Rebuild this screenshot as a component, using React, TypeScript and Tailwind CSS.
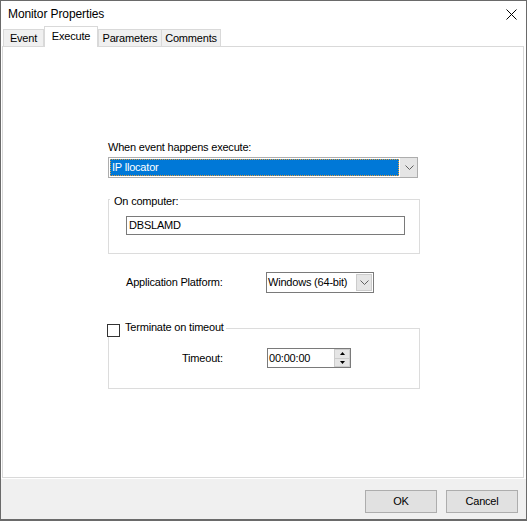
import React from "react";

const ui = { fontFamily: '"Liberation Sans", Arial, sans-serif' };

function Chevron() {
  return (
    <svg width="9" height="5" viewBox="0 0 9 5" className="block">
      <path d="M0.5 0.5 L4.5 4.5 L8.5 0.5" fill="none" stroke="#606060" strokeWidth="1" />
    </svg>
  );
}

function Tab({ label, selected, w }: { label: string; selected?: boolean; w: string }) {
  if (selected) {
    return (
      <div
        className={`${w} relative z-10 -mb-px flex h-[21px] items-start justify-center border border-b-0 border-[#d9d9d9] bg-white pt-[3px] text-[11px] leading-[13px] text-black`}
      >
        {label}
      </div>
    );
  }
  return (
    <div
      className={`${w} flex h-[17px] items-start justify-center border border-b-0 border-[#d9d9d9] bg-[#f0f0f0] pt-[2px] text-[11px] leading-[13px] text-black`}
    >
      {label}
    </div>
  );
}

export default function App() {
  return (
    <div
      style={ui}
      className="flex h-[521px] w-[527px] flex-col border border-b-2 border-[#6a6a6a] bg-white text-[11px] leading-[13px] tracking-[-0.2px] text-black"
    >
      {/* title bar */}
      <div className="flex h-[26px] shrink-0 items-center justify-between pl-[7px] pr-[8px]">
        <span className="text-[12px] leading-[14px] tracking-[-0.1px] text-[#000]">Monitor Properties</span>
        <svg width="11" height="11" viewBox="0 0 11 11" className="mr-[1px]">
          <path d="M0.5 0.5 L10.5 10.5 M10.5 0.5 L0.5 10.5" stroke="#000" strokeWidth="1" />
        </svg>
      </div>

      {/* tab strip */}
      <div className="flex h-[19px] shrink-0 items-end pl-[2px]">
        <Tab label="Event" w="w-[41px]" />
        <Tab label="Execute" selected w="w-[54px]" />
        <Tab label="Parameters" w="w-[64px]" />
        <Tab label="Comments" w="-ml-px w-[60px]" />
      </div>

      {/* tab page */}
      <div className="ml-px mr-[2px] flex h-[432px] shrink-0 flex-col border border-[#d9d9d9] bg-white">
        <div className="ml-[105px] flex w-[312px] flex-col pt-[94px]">
          <div className="h-[13px]">When event happens execute:</div>

          {/* command combo */}
          <div className="mt-[3px] flex h-[21px] w-[310px] border border-[#adadad] bg-white">
            <div className="m-px flex flex-1 items-center bg-[#0078d7] outline-1 outline-dotted outline-offset-[-1px] outline-[#e09a3a]">
              <span className="pl-[2px] text-white">IP llocator</span>
            </div>
            <div className="flex w-[17px] items-center justify-center border-l border-[#e5e5e5] bg-[#e5e5e5]">
              <Chevron />
            </div>
          </div>

          {/* on computer group */}
          <div className="relative mt-[21px] h-[55px] w-[312px] border border-[#dcdcdc] pl-[17px] pt-[16px]">
            <div className="absolute left-[1px] top-[-5px] bg-white pl-[4px] pr-[2px]">On computer:</div>
            <div className="flex h-[19px] w-[279px] items-center border border-[#7a7a7a] pl-[2px]">DBSLAMD</div>
          </div>

          {/* platform row */}
          <div className="ml-[18px] mt-[18px] flex items-center">
            <div className="w-[140px]">Application Platform:</div>
            <div className="flex h-[21px] w-[108px] border border-[#7a7a7a] bg-white">
              <div className="flex flex-1 items-center pl-[1px]">Windows (64-bit)</div>
              <div className="m-px flex w-[16px] items-center justify-center border border-[#cccccc] bg-[#e5e5e5]">
                <Chevron />
              </div>
            </div>
          </div>

          {/* timeout group */}
          <div className="relative mt-[35px] h-[61px] w-[312px] border border-[#dcdcdc] pl-[73px] pt-[19px]">
            <div className="absolute left-[-2px] top-[-8px] flex items-start bg-white pr-[2px]">
              <div className="mt-[3px] h-[13px] w-[13px] border border-[#333333] bg-white" />
              <span className="ml-[5px]">Terminate on timeout</span>
            </div>
            <div className="flex items-center">
              <div className="w-[85px]">Timeout:</div>
              <div className="flex h-[20px] w-[84px] border border-[#7a7a7a] bg-white">
                <div className="flex flex-1 items-center pl-[1px]">00:00:00</div>
                <div className="flex w-[16px] flex-col">
                  <div className="flex flex-1 items-center justify-center border border-[#cccccc] bg-[#e5e5e5]">
                    <svg width="5" height="3" viewBox="0 0 5 3"><path d="M2.5 0 L5 3 L0 3 Z" fill="#000" /></svg>
                  </div>
                  <div className="flex flex-1 items-center justify-center border border-t-0 border-[#cccccc] bg-[#e5e5e5]">
                    <svg width="5" height="3" viewBox="0 0 5 3"><path d="M0 0 L5 0 L2.5 3 Z" fill="#000" /></svg>
                  </div>
                </div>
              </div>
            </div>
          </div>
        </div>
      </div>

      {/* button bar */}
      <div className="flex flex-1 items-start justify-end gap-[9px] border-t border-white bg-[#f0f0f0] pr-[8px] pt-[11px]">
        <button className="h-[23px] w-[72px] border border-[#adadad] bg-[#e1e1e1] text-[11px] text-black">OK</button>
        <button className="h-[23px] w-[72px] border border-[#adadad] bg-[#e1e1e1] text-[11px] text-black">Cancel</button>
      </div>
    </div>
  );
}
